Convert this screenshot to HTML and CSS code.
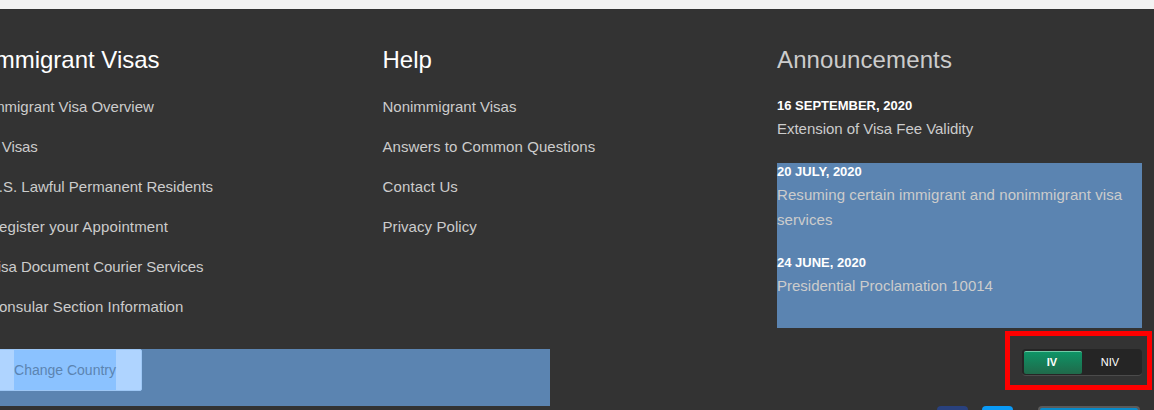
FILE: index.html
```html
<!DOCTYPE html>
<html lang="en">
<head>
<meta charset="utf-8">
<title>Visa Footer</title>
<link rel="stylesheet" href="styles.css">
</head>
<body>
<footer class="footer">
  <div class="columns">
    <section class="column">
      <h2 class="title">Immigrant Visas</h2>
      <ul class="links">
        <li class="tight">Immigrant Visa Overview</li>
        <li class="tighter">K Visas</li>
        <li>U.S. Lawful Permanent Residents</li>
        <li class="wide">Register your Appointment</li>
        <li class="tight">Visa Document Courier Services</li>
        <li class="loose">Consular Section Information</li>
      </ul>
    </section>
    <section class="column">
      <h2 class="title">Help</h2>
      <ul class="links">
        <li>Nonimmigrant Visas</li>
        <li class="loose">Answers to Common Questions</li>
        <li class="wide">Contact Us</li>
        <li class="loose">Privacy Policy</li>
      </ul>
    </section>
    <section class="column">
      <h2 class="title title-muted">Announcements</h2>
      <article class="item first"><h3>16 SEPTEMBER, 2020</h3><p class="tight">Extension of Visa Fee Validity</p></article>
      <div class="selected">
        <article class="item"><h3>20 JULY, 2020</h3><p class="loose">Resuming certain immigrant and nonimmigrant visa services</p></article>
        <article class="item"><h3>24 JUNE, 2020</h3><p>Presidential Proclamation 10014</p></article>
      </div>
    </section>
  </div>
  <div class="bottom">
    <div class="country"><button class="change"><span>Change Country</span></button></div>
    <div class="switch"><span class="option active">IV</span><span class="option">NIV</span></div>
  </div>
  <div class="social"><i class="facebook"></i><i class="twitter"></i><i class="badge"></i></div>
  <div class="highlight"></div>
</footer>
</body>
</html>
```
FILE: styles.css
```css
* { box-sizing: border-box; margin: 0; padding: 0; }
body { height: 410px; overflow: hidden; background: #f3f3f3; font-family: "Liberation Sans", Arial, sans-serif; color: #ccc; }
.footer { position: relative; height: 401px; margin-top: 9px; overflow: hidden; background: #333; }
.columns { display: grid; grid-template-columns: 394.5px 394.5px 365px; height: 340px; margin-left: -12px; padding-top: 36px; }
.title { height: 30px; line-height: 30px; font-size: 24px; font-weight: 400; color: #fff; white-space: nowrap; }
.title-muted { color: #ccc; letter-spacing: 0.12px; }
.links { list-style: none; padding-top: 12px; }
.links li { height: 40px; line-height: 40px; font-size: 15px; white-space: nowrap; }
.links .tight, .item .tight { letter-spacing: -0.03px; }
.links .tighter { letter-spacing: -0.15px; }
.links .loose, .item .loose { letter-spacing: 0.07px; }
.links .wide { letter-spacing: 0.13px; }
.item { height: 91px; }
.item h3 { height: 17px; line-height: 17px; font-size: 13px; color: #fff; }
.item p { margin-top: 2px; font-size: 15px; line-height: 25px; }
.first { height: 66px; margin-top: 22px; }
.selected { height: 165px; background: #5b84b1; }
.bottom { display: flex; justify-content: space-between; margin: 0 12px 0 -12px; height: 57px; }
.country { width: 562px; height: 57px; background: #5b84b1; }
.change { display: block; width: 154px; height: 42px; border: 1px solid #9dc7f5; border-radius: 2px; background: #afd4ff; font: 14px/40px "Liberation Sans", Arial, sans-serif; color: #5b84b1; }
.change span { display: block; width: 102px; margin: 0 auto; background: #8bc2ff; white-space: nowrap; }
.switch { display: flex; width: 120px; height: 27px; padding: 2px; border-radius: 4px; background: #252525; border-bottom: 1px solid #4b4b4b; }
.option { flex: 1; height: 24px; line-height: 23px; padding-right: 2px; text-align: center; font-size: 11px; color: #fff; border-radius: 2px; }
.active { height: 23px; line-height: 21px; background: linear-gradient(#0e9466, #20694a); border-top: 1px solid #71c9a7; font-weight: 700; }
.highlight { position: absolute; left: 1005px; top: 322px; width: 147px; height: 59px; border: 5px solid #f00; }
.social { display: flex; height: 4px; padding-left: 937px; }
.social i { height: 4px; margin-right: 14px; border-radius: 4px 4px 0 0; width: 31px; }
.facebook { background: #29417e; }
.twitter { background: #0a9af6; }
.social .badge { width: 103px; margin-left: 11px; background: #078bca; border: 2px solid #5a5a5a; border-bottom: 0; }
```
